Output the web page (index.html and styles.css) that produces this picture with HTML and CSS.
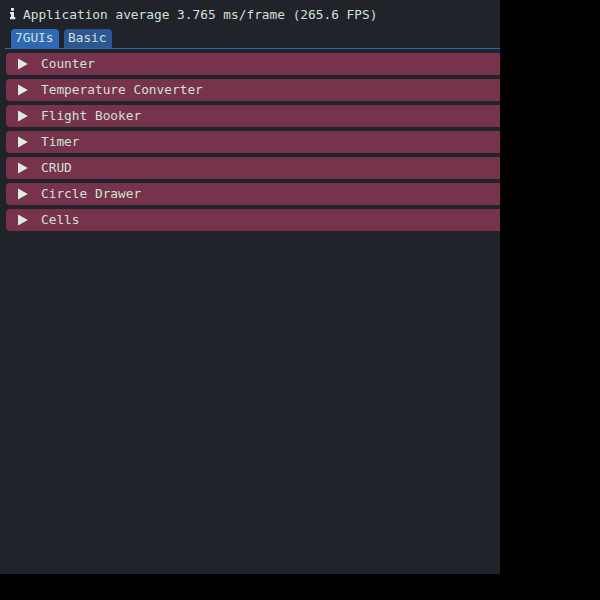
FILE: index.html
```html
<!DOCTYPE html>
<html lang="en">
<head>
<meta charset="utf-8">
<title>7GUIs</title>
<link rel="stylesheet" href="styles.css">
</head>
<body>
<main class="window">
  <div class="status">
    <svg class="info" width="6" height="12" viewBox="0 0 6 12"><path d="M1 0h3v2.8H1zM0 4h4v5h1.3v2.3H0V9h1V6H0z"/></svg>
    <span>Application average 3.765 ms/frame (265.6 FPS)</span>
  </div>
  <nav class="tabs">
    <div class="tab active">7GUIs</div>
    <div class="tab">Basic</div>
  </nav>
  <div class="list">
    <div class="header"><svg class="arrow" width="10" height="12" viewBox="0 0 10 12"><path d="M0 .5v11L9.8 6z"/></svg><span>Counter</span></div>
    <div class="header"><svg class="arrow" width="10" height="12" viewBox="0 0 10 12"><path d="M0 .5v11L9.8 6z"/></svg><span>Temperature Converter</span></div>
    <div class="header"><svg class="arrow" width="10" height="12" viewBox="0 0 10 12"><path d="M0 .5v11L9.8 6z"/></svg><span>Flight Booker</span></div>
    <div class="header"><svg class="arrow" width="10" height="12" viewBox="0 0 10 12"><path d="M0 .5v11L9.8 6z"/></svg><span>Timer</span></div>
    <div class="header"><svg class="arrow" width="10" height="12" viewBox="0 0 10 12"><path d="M0 .5v11L9.8 6z"/></svg><span>CRUD</span></div>
    <div class="header"><svg class="arrow" width="10" height="12" viewBox="0 0 10 12"><path d="M0 .5v11L9.8 6z"/></svg><span>Circle Drawer</span></div>
    <div class="header"><svg class="arrow" width="10" height="12" viewBox="0 0 10 12"><path d="M0 .5v11L9.8 6z"/></svg><span>Cells</span></div>
  </div>
</main>
</body>
</html>
```
FILE: styles.css
```css
* {
  box-sizing: border-box;
}

body {
  margin: 0;
  background: #000;
  color: #d0e1d7;
  font: 12.8px/22px "DejaVu Sans Mono", monospace;
}

.window {
  display: flex;
  flex-direction: column;
  width: 500px;
  height: 574px;
  background: #21232b;
}

.status {
  display: flex;
  height: 29px;
  padding: 4px 0 0 10px;
  gap: 7px;
}

.info {
  margin-top: 4px;
}

svg {
  flex: none;
  fill: #dbede2;
}

.tabs {
  display: flex;
  gap: 5px;
  height: 20px;
  margin-left: 5px;
  padding-left: 6px;
  border-bottom: 1px solid #3069b3;
}

.tab {
  width: 48px;
  padding-left: 4px;
  border-radius: 4px 4px 0 0;
  background: #2c5792;
  line-height: 18px;
}

.tab.active {
  background: #3069b3;
}

.list {
  display: flex;
  flex-direction: column;
  gap: 4px;
  padding: 4px 0 0 6px;
}

.header {
  display: flex;
  align-items: center;
  gap: 13px;
  height: 22px;
  padding-left: 12px;
  border-radius: 4px 0 0 4px;
  background: #77324c;
}
```
